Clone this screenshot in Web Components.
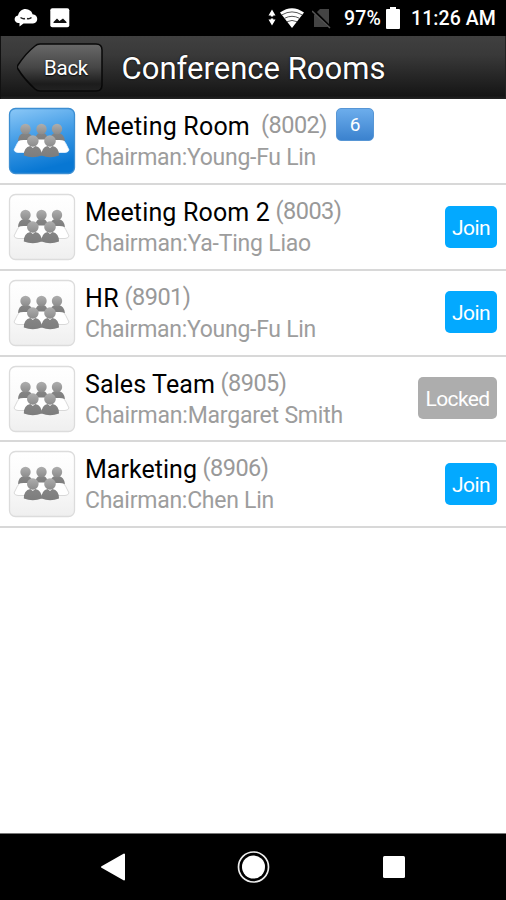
<!DOCTYPE html>
<html lang="en"><head><meta charset="utf-8"><title>Conference Rooms</title>
<style>html,body{margin:0;height:100%;background:#fff;overflow:hidden;font-family:Roboto,"Liberation Sans",sans-serif}</style></head>
<body><conference-app></conference-app>
<script>
// Text label whose tracking is adjusted so that it fills a given width.
class FitText extends HTMLElement{
  connectedCallback(){
    const root=this.attachShadow({mode:'open'});
    root.innerHTML='<style>:host{display:block;white-space:pre;line-height:1}span{display:inline-block}</style><span></span>';
    const s=root.querySelector('span'),t=this.getAttribute('text');
    s.textContent=t;
    const want=+this.getAttribute('width'),have=s.getBoundingClientRect().width;
    if(want&&have)s.style.letterSpacing=((want-have)/t.length)+'px';
  }
}
class StatusBar extends HTMLElement{
  connectedCallback(){
    this.attachShadow({mode:'open'}).innerHTML=`<style>
    :host{display:flex;height:36px;background:#000;color:#fff;box-sizing:border-box;padding:0 10px 0 14px;align-items:center;font-size:19.5px;font-weight:500}
    svg{display:block;flex:none}.gap{flex:1}fit-text{margin-top:1px}
    </style>
    <svg width="24" height="20" viewBox="0 0 24 20"><path fill="#fff" d="M4 15C-.5 14-.5 8.300 4 7.600 5 2.500 10-.2 14 1.500c3 1 4.200 3 4.500 4.800 6 .2 6.500 8.700.5 9.200H9.500L5.500 18.500V15z"/><path d="M6.500 9.500q2.500 1.800 4.500 1m2 0q2.500 .8 4.500-1" fill="none" stroke="#222" stroke-width="1.500"/></svg>
    <svg width="20" height="20" viewBox="0 0 20 20" style="margin-left:12px"><rect x=".3" y=".3" width="19" height="19" rx="2" fill="#fff"/><path d="M3.500 15v-1l3.500-3.500 2.500 2.500L13 10.500l3.500 3.500v1z" fill="#111"/></svg>
    <span class="gap"></span>
    <svg width="8" height="18" viewBox="0 0 8 18"><path fill="#fff" d="M4 .5l3.500 6H5.200v1H2.800v-1H.5zM4 16.500L.5 10.500H2.800v-1h2.400v1h2.300z"/></svg>
    <svg width="24" height="20" viewBox="0 0 24 20" style="margin-left:4px"><path fill="#fff" d="M0 4.500Q12-4 24 4.500L12 20z"/><path d="M2 6.800Q12 1 22 6.800M4.500 10.300q7.500-4 15 0M7 13.700q5-2.500 10 0" fill="none" stroke="#444" stroke-width=".9"/></svg>
    <svg width="20" height="21" viewBox="0 0 20 21" style="margin-left:8px"><path fill="#444" d="M8 1h9v18H2V7z"/><path d="M1 2l18 18" stroke="#000" stroke-width="2.500"/><path d="M0 3l18 17" stroke="#555" stroke-width="1.500"/></svg>
    <fit-text text="97%" width="37" style="margin-left:12px"></fit-text>
    <svg width="14" height="22" viewBox="0 0 14 22" style="margin:0 11px 0 5px"><path fill="#fff" d="M4 0h6v2h3q1 0 1 1v18q0 1-1 1H1q-1 0-1-1V3q0-1 1-1h3z"/></svg>
    <fit-text text="11:26 AM" width="85"></fit-text>`;
  }
}
class TitleBar extends HTMLElement{
  connectedCallback(){
    this.attachShadow({mode:'open'}).innerHTML=`<style>
    :host{display:flex;height:63px;box-sizing:border-box;background:linear-gradient(#404040,#393939 30%,#151515 95%,#242424);color:#fff;align-items:center;padding-left:16px;border-left:1px solid #111;border-right:1px solid #222}
    .back{display:grid;width:86px;height:50px;margin-top:0}.back>*{grid-area:1/1}
    .back fit-text{font-size:20.500px;margin:15px 0 0 27px;text-shadow:0 1px 2px #000}
    h1{margin:1px 0 0 18.500px;font-weight:400;font-size:31px;text-shadow:0 0 2px #000}
    </style>
    <div class="back"><svg width="86" height="50" viewBox="0 0 86 50"><defs><linearGradient id="g" x2="0" y2="1"><stop stop-color="#696969"/><stop offset=".5" stop-color="#464646"/><stop offset=".85" stop-color="#1c1c1c"/><stop offset="1" stop-color="#222"/></linearGradient></defs><path d="M18 3Q20 1 23 1H79Q85 1 85 7V42Q85 48 79 48H23Q20 48 18 46Q7 36 1 26Q-.5 24 1 22Q9 10 18 3Z" fill="url(#g)" stroke="#080808" stroke-width="1.500"/></svg><fit-text text="Back" width="44"></fit-text></div>
    <h1><fit-text text="Conference Rooms" width="264"></fit-text></h1>`;
  }
}
class RoomIcon extends HTMLElement{
  connectedCallback(){
    const on=this.hasAttribute('active');
    const head=(x,y,r)=>`<circle cx="${x}" cy="${y}" r="${r}" fill="url(#h)"/>`;
    this.attachShadow({mode:'open'}).innerHTML=`<style>:host{display:block;width:68px;height:68px}svg{display:block}</style>
    <svg width="68" height="68" viewBox="0 0 68 68"><defs>
    <linearGradient id="b" x2="${on?.25:0}" y2="1"><stop stop-color="${on?'#8cc8f7':'#fff'}"/><stop offset=".5" stop-color="${on?'#429ce6':'#fafafa'}"/><stop offset="1" stop-color="${on?'#0877d3':'#efefef'}"/></linearGradient>
    <linearGradient id="h" x2="0" y2="1"><stop stop-color="#aeaeae"/><stop offset="1" stop-color="#8c8c8c"/></linearGradient>
    <linearGradient id="s" x2="0" y2="1"><stop stop-color="#858585"/><stop offset="1" stop-color="#7d7d7d"/></linearGradient></defs>
    <rect x="1.500" y="1.500" width="65" height="65" rx="6" fill="url(#b)" stroke="${on?'#3c8ed2':'#dcdcdc'}" stroke-width="1.300"/>
    <path d="M13 31H54Q58 36 61 43Q60 45.500 57 45.500H10Q7 45.500 6 43Q9 36 13 31Z" fill="#fff" stroke="${on?'#e8f4ff':'#cfcfcf'}" stroke-width=".8"/>
    <g fill="url(#s)"><path d="M10 34q.5-7 5.500-8h4q5 1 5 7h-9q-3 0-5.500 1zM27.500 32.500q0-5.500 4-6.500h4q4 1 4 6.500zM42.500 33q0-6 4.500-7h4q5 1 6 8-3-1-5.500-1z"/></g>
    ${head(17.500,22,5.200)}${head(33.500,22,5.200)}${head(49,22,5.200)}
    <g fill="url(#s)"><path d="M15.800 48.500q0-8.500 6.500-9.500l2.500 2 2.500-2q6.500 1 6.500 9.500-9 3.500-18 0zM33.500 48.500q0-8.500 6-9.500l2.500 2 2.500-2q6.500 1 6.500 9.500-9 3.500-17.500 0z"/></g>
    ${head(24.800,34,5.800)}${head(42,34,5.800)}</svg>`;
  }
}
class RoomRow extends HTMLElement{
  connectedCallback(){
    const a=n=>this.getAttribute(n);
    this.attachShadow({mode:'open'}).innerHTML=`<style>
    :host{display:flex;height:85.75px;box-sizing:border-box;border-bottom:2px solid #d8d8d8;padding:8px 9px 0 8px;align-items:flex-start}
    .text{margin:7px 0 0 9px;flex:1}.line{display:flex;align-items:flex-start;height:32px;font-size:25px;color:#000}
    .num{font-size:23.500px;color:#999;margin-top:0}.sub{font-size:23px;color:#9d9d9d}
    slot{display:block}</style>
    <room-icon ${this.hasAttribute('active')?'active':''}></room-icon>
    <div class="text"><div class="line"><fit-text text="${a('name')}" width="${a('nw')}"></fit-text><fit-text class="num" style="margin-left:${a('gap')||5.5}px" text="(${a('number')})" width="66"></fit-text><slot name="badge"></slot></div>
    <fit-text class="sub" text="Chairman:${a('chair')}" width="${a('cw')}"></fit-text></div><slot></slot>`;
  }
}
class RoomButton extends HTMLElement{
  connectedCallback(){
    const l=this.hasAttribute('locked');
    this.attachShadow({mode:'open'}).innerHTML=`<style>
    :host{display:flex;width:${l?79:52}px;height:42px;margin-top:12.500px;border-radius:5px;background:${l?'#adadad':'#03a9ff'};color:#fff;font-size:21px;align-items:center;justify-content:center}
    fit-text{margin-top:3px}</style><fit-text text="${l?'Locked':'Join'}" width="${l?64:38}"></fit-text>`;
  }
}
class CountBadge extends HTMLElement{
  connectedCallback(){
    this.attachShadow({mode:'open'}).innerHTML=`<style>
    :host{display:flex;width:38px;height:33px;margin:-6px 0 0 9px;box-sizing:border-box;border-radius:5px;background:linear-gradient(#6cadec,#3b82ce);border:1px solid #5796d5;color:#fff;font-size:19px;align-items:center;justify-content:center}</style><slot></slot>`;
  }
}
class NavBar extends HTMLElement{
  connectedCallback(){
    this.attachShadow({mode:'open'}).innerHTML=`<style>
    :host{display:flex;height:67px;box-sizing:border-box;background:#000;border-top:1px solid #777;justify-content:space-between;align-items:center;padding:0 100px}svg{display:block}</style>
    <svg width="26" height="30" viewBox="0 0 26 30"><path d="M2 15L24 2.500V27.500z" fill="#fff" stroke="#fff" stroke-width="2" stroke-linejoin="round"/></svg>
    <svg width="34" height="34" viewBox="0 0 34 34"><circle cx="16.500" cy="17" r="15" fill="none" stroke="#eee" stroke-width="1.700"/><circle cx="16.500" cy="17" r="11.500" fill="#fff"/></svg>
    <svg width="24" height="24" viewBox="0 0 24 24"><rect x="1" y="1" width="22" height="22" rx="1.500" fill="#fff"/></svg>`;
  }
}
class ConferenceApp extends HTMLElement{
  connectedCallback(){
    this.attachShadow({mode:'open'}).innerHTML=`<style>:host{display:flex;flex-direction:column;width:506px;height:900px;background:#fff}main{flex:1;padding-top:.4px}</style>
    <status-bar></status-bar><title-bar></title-bar><main>
    <room-row active name="Meeting Room" nw="165" gap="11" number="8002" chair="Young-Fu Lin" cw="231"><count-badge slot="badge">6</count-badge></room-row>
    <room-row name="Meeting Room 2" nw="185" number="8003" chair="Ya-Ting Liao" cw="226"><room-button></room-button></room-row>
    <room-row name="HR" nw="34" number="8901" chair="Young-Fu Lin" cw="231"><room-button></room-button></room-row>
    <room-row name="Sales Team" nw="130" number="8905" chair="Margaret Smith" cw="258"><room-button locked></room-button></room-row>
    <room-row name="Marketing" nw="112" number="8906" chair="Chen Lin" cw="189"><room-button></room-button></room-row>
    </main><nav-bar></nav-bar>`;
  }
}
for(const [n,c] of Object.entries({'fit-text':FitText,'status-bar':StatusBar,'title-bar':TitleBar,'room-icon':RoomIcon,'room-row':RoomRow,'room-button':RoomButton,'count-badge':CountBadge,'nav-bar':NavBar,'conference-app':ConferenceApp}))customElements.define(n,c);
</script></body></html>
